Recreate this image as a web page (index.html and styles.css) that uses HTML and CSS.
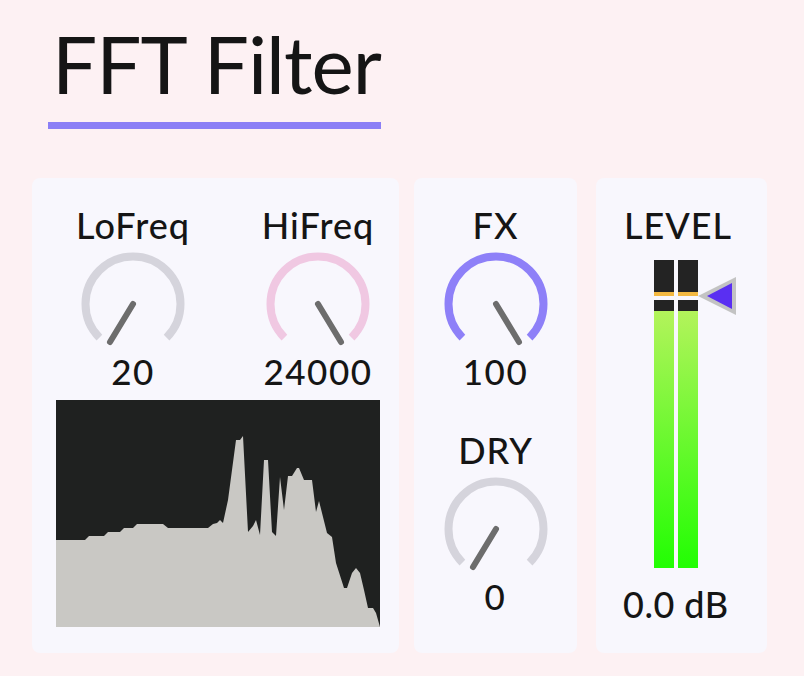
FILE: index.html
```html
<!DOCTYPE html>
<html lang="en">
<head>
    <meta charset="UTF-8">
    <meta name="viewport" content="width=device-width, initial-scale=1.0">
    <title>FFT Filter</title>
    <link rel="stylesheet" href="styles.css">
</head>
<body>
    <div class="device">
        <div class="header">
            <h1 class="title">FFT Filter</h1>
        </div>

        <div class="panels">
            <!-- filter band + spectrum -->
            <div class="panel panel-filter">
                <div class="knob-row">
                    <div class="knob-group">
                        <div class="knob-label">LoFreq</div>
                        <svg class="knob" viewBox="0 0 104 104" width="104" height="104">
                            <path class="ring ring-grey" d="M18.41 85.59 A47.5 47.5 0 1 1 85.59 85.59"/>
                            <line class="needle" x1="52" y1="52" x2="29" y2="90"/>
                        </svg>
                        <div class="knob-value">20</div>
                    </div>
                    <div class="knob-group">
                        <div class="knob-label">HiFreq</div>
                        <svg class="knob" viewBox="0 0 104 104" width="104" height="104">
                            <path class="ring ring-pink" d="M18.41 85.59 A47.5 47.5 0 1 1 85.59 85.59"/>
                            <line class="needle" x1="52" y1="52" x2="75" y2="90"/>
                        </svg>
                        <div class="knob-value">24000</div>
                    </div>
                </div>

                <svg class="spectrum" viewBox="0 0 324 227" width="324" height="227">
                    <rect width="324" height="227" fill="#1f2120"/>
                    <polygon fill="#c9c8c4" points="0,140 29,140 33,136 48,136 52,132 64,132 68,128 77,128 81,124 107,124 112,128 152,128 157,124 161,123 164,120 167,123 172,100 180,40 184,40 187,36 192,132 197,126 200,120 204,135 208,60 212,60 216,132 220,136 224,77 228,110 232,76 236,76 241,68 243,68 248,80 256,80 260,112 263,101 271,133 276,137 280,163 288,188 291,188 296,173 300,168 304,173 308,190 312,208 317,208 320,213 324,227 0,227"/>
                </svg>
            </div>

            <!-- wet / dry -->
            <div class="panel panel-mix">
                <div class="knob-group">
                    <div class="knob-label">FX</div>
                    <svg class="knob" viewBox="0 0 104 104" width="104" height="104">
                        <path class="ring ring-purple" d="M18.41 85.59 A47.5 47.5 0 1 1 85.59 85.59"/>
                        <line class="needle" x1="52" y1="52" x2="75" y2="90"/>
                    </svg>
                    <div class="knob-value">100</div>
                </div>
                <div class="knob-group dry">
                    <div class="knob-label">DRY</div>
                    <svg class="knob" viewBox="0 0 104 104" width="104" height="104">
                        <path class="ring ring-grey" d="M18.41 85.59 A47.5 47.5 0 1 1 85.59 85.59"/>
                        <line class="needle" x1="52" y1="52" x2="29" y2="90"/>
                    </svg>
                    <div class="knob-value">0</div>
                </div>
            </div>

            <!-- output level -->
            <div class="panel panel-level">
                <div class="knob-label level-label">LEVEL</div>
                <div class="meter">
                    <div class="meter-bar">
                        <div class="meter-top"></div>
                        <div class="meter-peak"></div>
                        <div class="meter-gap"></div>
                        <div class="meter-dark"></div>
                        <div class="meter-fill"></div>
                    </div>
                    <div class="meter-bar">
                        <div class="meter-top"></div>
                        <div class="meter-peak"></div>
                        <div class="meter-gap"></div>
                        <div class="meter-dark"></div>
                        <div class="meter-fill"></div>
                    </div>
                    <svg class="meter-handle" viewBox="0 0 38 38" width="38" height="38">
                        <polygon points="0,19 38,0 38,38" fill="#c3c3c3"/>
                        <polygon points="9,19 34,6 34,32" fill="#5a2ff2"/>
                    </svg>
                </div>
                <div class="level-value">0.0 dB</div>
            </div>
        </div>
    </div>
</body>
</html>
```

FILE: styles.css
```css
:root {
    --background: #fdf1f3;
    --surface: #f8f7fd;
    --text: #151515;
    --accent: #8b7ff6;
    --needle: #6d6d6d;
    --radius: 8px;
}

* {
    margin: 0;
    padding: 0;
    box-sizing: border-box;
}

body {
    background-color: var(--background);
    color: var(--text);
    font-family: 'Lato', 'Open Sans', sans-serif;
}

.device {
    width: 804px;
    height: 676px;
}

.header {
    padding: 0 0 0 48px;
    height: 178px;
}

.title {
    display: inline-block;
    font-size: 80px;
    font-weight: 400;
    line-height: 100px;
    letter-spacing: -1px;
    padding: 13px 0 9px 4px;
    border-bottom: 7px solid var(--accent);
}

.panels {
    display: flex;
    padding-left: 32px;
    gap: 15px;
}

.panel {
    background: var(--surface);
    border-radius: var(--radius);
    height: 475px;
    padding-top: 27px;
}

.panel-filter {
    width: 367px;
    padding-left: 24px;
}

.panel-mix {
    width: 163px;
    margin-right: 4px;
    display: flex;
    flex-direction: column;
    align-items: center;
}

.panel-level {
    width: 171px;
    display: flex;
    flex-direction: column;
}

.knob-row {
    display: grid;
    grid-template-columns: 130px 130px;
    column-gap: 55px;
    margin-left: 12px;
}

.knob-group {
    display: flex;
    flex-direction: column;
    align-items: center;
}

.knob-label {
    font-size: 36px;
    font-weight: 500;
    line-height: 40px;
    letter-spacing: 1px;
    text-align: center;
}

.level-label {
    padding-right: 7px;
}

.knob {
    margin-top: 7px;
}

.ring {
    fill: none;
    stroke-width: 8;
}

.ring-grey { stroke: #d5d4dc; }
.ring-pink { stroke: #f0c8e2; }
.ring-purple { stroke: #8e80f8; }

.needle {
    stroke: var(--needle);
    stroke-width: 6;
    stroke-linecap: round;
}

.knob-value {
    font-size: 35px;
    font-weight: 500;
    line-height: 34px;
    letter-spacing: 1.5px;
    margin-top: -2px;
}

.spectrum {
    display: block;
    margin-top: 12px;
}

.dry {
    margin-top: 42px;
}

.meter {
    display: flex;
    align-items: flex-start;
    margin: 15px 0 0 58px;
    height: 308px;
}

.meter-bar {
    width: 20px;
    height: 308px;
    display: flex;
    flex-direction: column;
    margin-right: 4px;
}

.meter-bar + .meter-bar {
    margin-right: 0;
}

.meter-top {
    height: 32px;
    background: #232323;
}

.meter-peak {
    height: 4px;
    background: #f4b942;
}

.meter-gap {
    height: 4px;
}

.meter-dark {
    height: 11px;
    background: #232323;
}

.meter-fill {
    flex: 1;
    background: linear-gradient(to bottom, #b3f35b, #22fe03);
}

.meter-handle {
    margin-top: 17px;
}

.level-value {
    font-size: 36px;
    font-weight: 500;
    line-height: 40px;
    letter-spacing: 0.5px;
    margin: 16px 0 0 27px;
}
```
